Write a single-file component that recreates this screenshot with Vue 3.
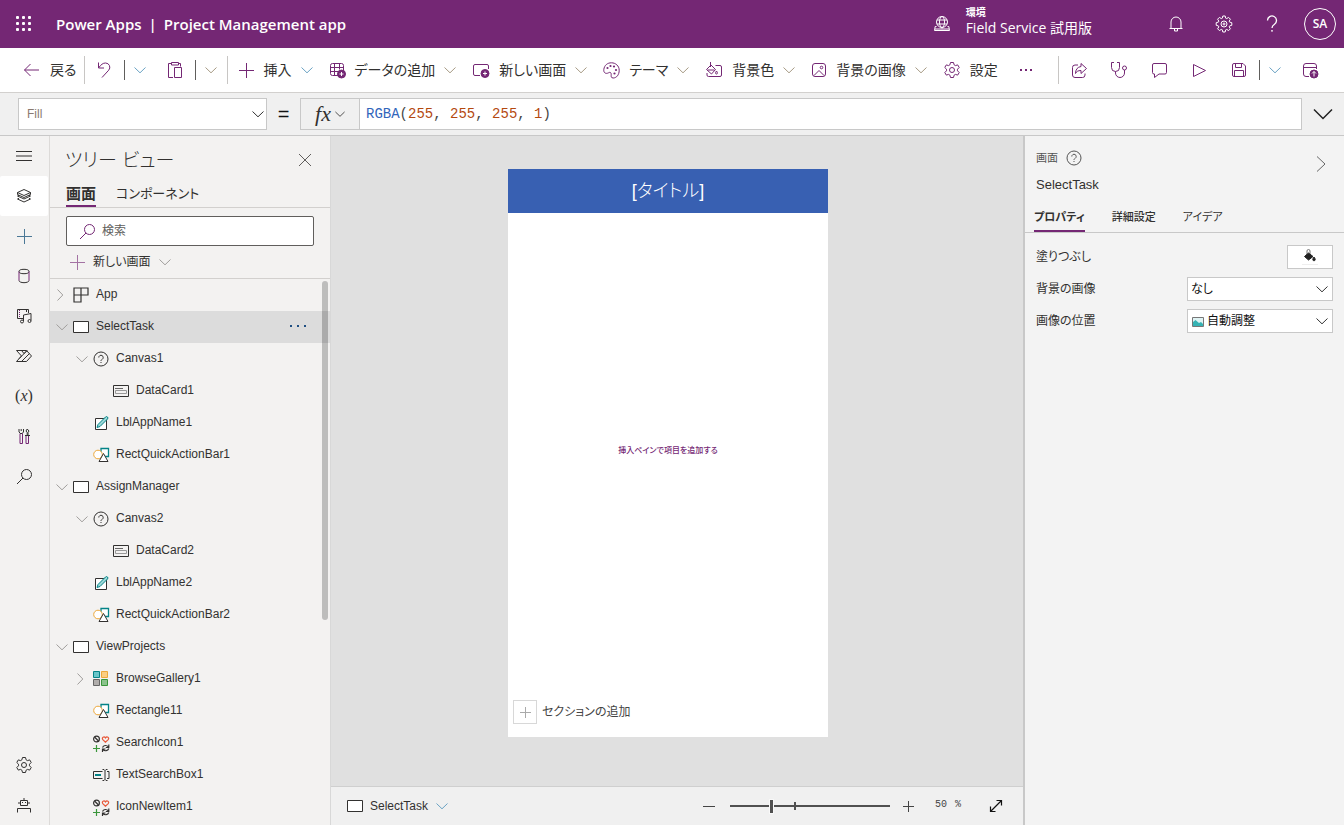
<script setup>
import { h, ref } from 'vue'

const shapes = {
  waffle: [17, 17, '<g fill="currentColor" stroke="none"><rect x="0" y="0" width="3" height="3" rx="1"/><rect x="6" y="0" width="3" height="3" rx="1"/><rect x="12" y="0" width="3" height="3" rx="1"/><rect x="0" y="6" width="3" height="3" rx="1"/><rect x="6" y="6" width="3" height="3" rx="1"/><rect x="12" y="6" width="3" height="3" rx="1"/><rect x="0" y="12" width="3" height="3" rx="1"/><rect x="6" y="12" width="3" height="3" rx="1"/><rect x="12" y="12" width="3" height="3" rx="1"/></g>'],
  globe: [16, 16, '<circle cx="8" cy="6" r="5.5"/><ellipse cx="8" cy="6" rx="2.5" ry="5.5"/><path d="M3 4h10M3 8h10M2.500 10.500H1.200L.5 14.500h15L14.800 10.500H13.500M8 11v1.500M1 13h14"/>'],
  bell: [16, 18, '<path d="M3 13V7a5 5 0 0 1 10 0v6M1.500 13.500h13M6.500 14v2h3v-2"/>'],
  gear: [18, 18, '<circle cx="9" cy="9" r="2.500"/><path d="M7.500 1.500h3l.6 2.300 1.300.8 2.300-.7 1.500 2.600-1.700 1.700v1.600l1.700 1.700-1.500 2.600-2.300-.7-1.300.8-.6 2.300h-3l-.6-2.300-1.300-.8-2.300.7-1.500-2.600 1.700-1.700V8.200L1.800 6.500l1.500-2.600 2.300.7 1.300-.8z" stroke-linejoin="round"/>'],
  gearBold: [18, 18, '<circle cx="9" cy="9" r="3"/><circle cx="9" cy="9" r="1"/><path d="M7.800 1h2.400l.5 2.200 1 .4 1.900-1.200 1.800 1.800-1.200 1.900.4 1 2.200.6v2.600l-2.200.6-.4 1 1.200 1.900-1.800 1.800-1.900-1.200-1 .4-.5 2.200H7.800l-.5-2.200-1-.4-1.900 1.200-1.800-1.800 1.200-1.900-.4-1L1.200 10.300V7.700l2.200-.6.4-1-1.200-1.900 1.800-1.800 1.900 1.200 1-.4z"/>'],
  help: [12, 18, '<path d="M1.500 5.500a4.500 4.500 0 1 1 7 3.700C6.500 10.500 6 11.300 6 13" stroke-width="1.3"/><circle cx="6" cy="15.800" r=".9" fill="currentColor" stroke="none"/>'],
  back: [17, 14, '<path d="M16 7H1.500M7.500 1l-6 6 6 6"/>'],
  undo: [16, 18, '<path d="M2.500 1.500v5.500h5.500M2.500 7C5 3.500 7 2 9.500 2a4.300 4.300 0 0 1 3.200 7.200L6 16.500"/>'],
  chevron: [12, 8, '<path d="M.5 1.500 6 6.800l5.500-5.300"/>'],
  chevronLarge: [20, 12, '<path d="m1 1.500 9 9 9-9" stroke-width="1.5"/>'],
  right: [8, 14, '<path d="m1.500 1.500 5.300 5.500-5.300 5.500"/>'],
  rightLarge: [12, 18, '<path d="m2 1.500 8 7.500-8 7.500"/>'],
  paste: [16, 18, '<path d="M6 16.500H1.500v-14h3M11.500 2.500h2v3M4.500 1.500h7v2.500h-7zM7.500 6.500h7v10h-7z"/>'],
  plus: [17, 17, '<path d="M8.500 1v15M1 8.500h15"/>'],
  data: [17, 18, '<rect x="1.500" y="2.500" width="13" height="12" rx="2"/><path d="M1.500 6.500h13M1.500 10.500h8M5.500 2.500v12M10.500 2.500v6"/><circle cx="12.500" cy="13" r="4" fill="#742774"/><path d="M10.500 13h4M12.500 11v4" stroke="#fff"/>'],
  screenAdd: [18, 16, '<path d="M8 13.500H3a1.500 1.500 0 0 1-1.500-1.500V4A1.500 1.500 0 0 1 3 2.500h12A1.500 1.500 0 0 1 16.500 4v3"/><circle cx="13" cy="11.500" r="4" fill="#742774"/><path d="M11 11.500h4M13 9.500v4" stroke="#fff"/>'],
  palette: [17, 17, '<path d="M.8 7.500C1.500 3 4.500.800 8.500.800s7.700 3 7.700 7.500-2.700 7.700-6 7.700c-2.500 0-2-2-2-3.500 0-2-1-2.700-2.700-1.700-2.500 1.400-5.100.2-4.700-3.300z"/><g fill="currentColor" stroke="none"><circle cx="4.500" cy="6" r="1.100"/><circle cx="7.500" cy="4" r="1.100"/><circle cx="11" cy="4.500" r="1.100"/><circle cx="13" cy="8" r="1.100"/><circle cx="11.500" cy="11.500" r="1.100"/></g>'],
  fill: [18, 16, '<path d="M10.500 3.500H15a1.500 1.500 0 0 1 1.500 1.500v8a1.500 1.500 0 0 1-1.500 1.500H3.500A1.500 1.500 0 0 1 2 13v-2M5.500 0v5M1.500 7.500 6 3l4.500 4.500-4 4.500zM2.500 8h7M11.500 9c-1.500 2-1 3 0 3s1.500-1 0-3"/>'],
  picture: [16, 16, '<rect x="1.500" y="1.500" width="13" height="13" rx="2.500"/><path d="m3 13.500 5-5 5 5"/><circle cx="10.500" cy="5.500" r="1.300"/>'],
  dots: [14, 4, '<g fill="currentColor" stroke="none"><rect x="1" y="1" width="2" height="2"/><rect x="6" y="1" width="2" height="2"/><rect x="11" y="1" width="2" height="2"/></g>'],
  wideDots: [16, 4, '<g fill="currentColor" stroke="none"><rect x="0" y="1" width="2" height="2"/><rect x="7" y="1" width="2" height="2"/><rect x="14" y="1" width="2" height="2"/></g>'],
  share: [17, 17, '<path d="M7 3H4a2.500 2.500 0 0 0-2.500 2.500v7.500A2.500 2.500 0 0 0 4 15.500h7.500A2.500 2.500 0 0 0 14 13v-1.500M10 1.500l5.500 5-5.500 5v-3c-3 0-4.500 1-5.500 3 0-4 2-6.500 5.500-7z"/>'],
  stethoscope: [18, 18, '<path d="M4 1.500H1.500v5a4 4 0 0 0 8 0v-5H7M5.500 10.500V12a4.500 4.500 0 0 0 9 0V9"/><circle cx="14.500" cy="7" r="2"/>'],
  comment: [17, 17, '<path d="M3 1.500h11A1.500 1.500 0 0 1 15.500 3v7.500A1.500 1.500 0 0 1 14 12H8l-4.500 3.500V12H3a1.500 1.500 0 0 1-1.500-1.500V3A1.500 1.500 0 0 1 3 1.500z"/>'],
  play: [15, 15, '<path d="m1.500 1.500 12 6-12 6z" stroke-linejoin="round"/>'],
  save: [16, 16, '<path d="M1.500 3A1.500 1.500 0 0 1 3 1.500h9l2.500 2.500v9a1.500 1.500 0 0 1-1.500 1.500H3A1.500 1.500 0 0 1 1.500 13zM4.500 1.500v4h6v-4M3.500 14.500v-6h9v6"/>'],
  publish: [17, 17, '<path d="M7 14.500H4A2.500 2.500 0 0 1 1.500 12V4A2.500 2.500 0 0 1 4 1.500h8A2.500 2.500 0 0 1 14.500 4v3M1.500 5.500h13"/><circle cx="12" cy="12" r="4" fill="#742774"/><path d="M12 14.500v-5M10 11.500l2-2 2 2" stroke="#fff"/>'],
  menu: [16, 10, '<path d="M0 .5h16M0 5h16M0 9.500h16"/>'],
  layers: [16, 16, '<path d="m8 1.500 6.500 3L8 7.500l-6.500-3zM1.500 4.500v2L8 9.500l6.500-3v-2M3 7.200 1.500 8 8 11l6.500-3-1.500-.8M3 10.200 1.500 11 8 14l6.500-3-1.500-.8"/>'],
  database: [12, 16, '<g stroke="#323130"><ellipse cx="6" cy="3.500" rx="5" ry="2.200"/><path d="M1 12.500c0 1.200 2.200 2.200 5 2.200s5-1 5-2.200"/></g><path d="M1 3.500v9M11 3.500v9"/>'],
  media: [17, 16, '<path d="M7.500 10.500H1.500v-9h11V5M10.500 2v2M7.500 13V7l7.500-1.500v7"/><circle cx="6" cy="13.500" r="1.500"/><circle cx="13.500" cy="13" r="1.500"/><path d="M3.500 2v8" stroke="#742774" stroke-dasharray="1 1"/>'],
  flow: [18, 14, '<path d="M1.500 1.500h10L16.500 7l-5 5.500h-10L6.500 7zM6.500 1.500 9 4.500l3-3M4 9.700l8-8M6.500 12.500l8-8"/>'],
  tools: [12, 17, '<path d="M2 5.500h2.500v10H2zM8 8v7.500h2.500V8"/><g stroke="#323130"><path d="M1 1v3l1.500 1.500h1.500L5.500 4V1M3.200 1v2M7 7.500h5M9.200 7.500v-3L8 3l1.200-2 1.800 2-1 1.500v3"/></g>'],
  search: [17, 17, '<circle cx="10.500" cy="6.500" r="5"/><path d="m7 10-6 6"/>'],
  robot: [16, 16, '<path d="M8 3V1M4.500 3.500h7v5h-7zM3 5v2M13 5v2M1.500 15.500v-4h13v4"/><g fill="currentColor" stroke="none"><rect x="6" y="5" width="1" height="1"/><rect x="9" y="5" width="1" height="1"/></g>'],
  close: [14, 14, '<path d="m1 1 12 12M13 1 1 13"/>'],
  app: [16, 16, '<path d="M1 1h7v7H1zM8 1h7v7H8zM1 8h7v7H1z" stroke-width="1.200"/>'],
  screen: [16, 12, '<path d="M.5.5h15v11H.5z" fill="#fff"/>'],
  canvas: [16, 16, '<circle cx="8" cy="8" r="7"/><path d="M5.800 6.500a2.200 2.200 0 1 1 3.400 1.800C8.300 8.900 8 9.300 8 10"/><rect x="7.500" y="11" width="1" height="1" fill="currentColor" stroke="none"/>'],
  card: [16, 12, '<path d="M.5.5h15v11H.5z"/><path d="M2 3.500h8" stroke="#666"/><path d="M2.500 5.500h11v3h-11z" stroke="#999"/>'],
  label: [16, 16, '<path d="M2.500 3.500h11v11h-11z" fill="#fff"/><path d="M4 12.500l1-3 7.500-7.500a1.200 1.200 0 0 1 2 2L7 11.500z" fill="#9dd8d8" stroke="#038387"/>'],
  shapes: [17, 16, '<path d="M8 1.500h7.500v8H8z" fill="#fff" stroke="#038387" stroke-width="1.300"/><circle cx="5" cy="7.500" r="4.300" fill="#fff" stroke="#eda83b"/><path d="M10.500 6.500 15 14.500H6z" fill="#fff"/>'],
  gallery: [16, 16, '<path d="M.5.5h6v6h-6z" fill="#69c5c9" stroke="#038387"/><path d="M8.500.5h6v6h-6z" fill="#fbce82" stroke="#eda83b"/><path d="M.5 8.500h6v6h-6z" fill="#b0adab" stroke="#666"/><path d="M8.500 8.500h6v6h-6z" fill="#8bc38c" stroke="#3a963b"/>'],
  icons: [17, 17, '<g stroke-width="1.200"><circle cx="3.500" cy="4" r="2.900"/><path d="m1.500 2 4 4"/><path d="M12.500 7.200 9.800 4.600c-1.300-2 1.200-3.800 2.700-1.700 1.500-2.100 4-.3 2.700 1.700z" stroke="#e8593a"/><path d="M3.500 10v7M0 13.500h7" stroke="#3a963b"/><path d="M9.500 12.500C10.500 10 13.500 9.800 15.500 12M15.800 9.500v3h-3M15.800 13.500c-1 2.500-4 3-6 1M9.500 17v-3h3"/></g>'],
  textbox: [17, 14, '<path d="M9.500 3.500H.5v7h9M14 3.500h2v7h-2"/><path d="M2 7h6" stroke="#038387" stroke-width="2"/><path d="M9.500 1.500h1.500l1 1 1-1h1.500M9.500 12.500h1.500l1-1 1 1h1.500M12 2.500v9"/>'],
  bucket: [16, 16, '<path d="M5 6V2a1.500 1.500 0 0 1 3 0v4" stroke="#777"/><path d="M2.500 7.500 6.500 4l4.500 3.500L6.500 11z" fill="currentColor"/><path d="M12 8c-2 2.500-1.200 3.700 0 3.700S14 10.500 12 8" fill="currentColor"/><path d="M0 15.500h16" stroke="#eee"/>'],
  photo: [12, 10, '<path d="M.5.500h11v9H.500z" fill="#dff3f4" stroke="#777"/><path d="M1 9V5l2.500-2L7 6l2-1 2 2v2z" fill="#36b3b4" stroke="none"/>'],
  expand: [14, 14, '<path d="m1.500 12.500 11-11M7.500 1.500h5v5M1.500 7.500v5h5" stroke-width="1.200"/>'],
  minus: [12, 1, '<path d="M0 .5h12"/>'],
  plusSmall: [11, 11, '<path d="M5.500 0v11M0 5.500h11"/>'],
}

const Icon = ({ name }) => {
  const [width, height, innerHTML] = shapes[name]
  return h('svg', {
    width, height, viewBox: `0 0 ${width} ${height}`,
    fill: 'none', stroke: 'currentColor', 'aria-hidden': 'true', innerHTML,
  })
}
Icon.props = ['name']

const commands = [
  { icon: 'plus', label: '挿入', menu: true },
  { icon: 'data', label: 'データの追加', menu: true },
  { icon: 'screenAdd', label: '新しい画面', menu: true },
  { icon: 'palette', label: 'テーマ', menu: true },
  { icon: 'fill', label: '背景色', menu: true },
  { icon: 'picture', label: '背景の画像', menu: true },
  { icon: 'gear', label: '設定' },
]
const actions = [
  { icon: 'share', label: '共有' },
  { icon: 'stethoscope', label: 'アプリ チェッカー' },
  { icon: 'comment', label: 'コメント' },
  { icon: 'play', label: 'プレビュー' },
  { icon: 'save', label: '保存' },
]
const rail = [
  { icon: 'layers', label: 'ツリー ビュー', active: true },
  { icon: 'plus', label: '挿入', tone: 'blue' },
  { icon: 'database', label: 'データ', tone: 'plum' },
  { icon: 'media', label: 'メディア' },
  { icon: 'flow', label: 'Power Automate' },
  { text: 'x', label: '変数' },
  { icon: 'tools', label: '高度なツール', tone: 'plum' },
  { icon: 'search', label: '検索' },
]
const tree = [
  { name: 'App', icon: 'app', level: 0, toggle: 'right' },
  { name: 'SelectTask', icon: 'screen', level: 0, toggle: 'chevron', selected: true },
  { name: 'Canvas1', icon: 'canvas', level: 1, toggle: 'chevron' },
  { name: 'DataCard1', icon: 'card', level: 2 },
  { name: 'LblAppName1', icon: 'label', level: 1 },
  { name: 'RectQuickActionBar1', icon: 'shapes', level: 1 },
  { name: 'AssignManager', icon: 'screen', level: 0, toggle: 'chevron' },
  { name: 'Canvas2', icon: 'canvas', level: 1, toggle: 'chevron' },
  { name: 'DataCard2', icon: 'card', level: 2 },
  { name: 'LblAppName2', icon: 'label', level: 1 },
  { name: 'RectQuickActionBar2', icon: 'shapes', level: 1 },
  { name: 'ViewProjects', icon: 'screen', level: 0, toggle: 'chevron' },
  { name: 'BrowseGallery1', icon: 'gallery', level: 1, toggle: 'right' },
  { name: 'Rectangle11', icon: 'shapes', level: 1 },
  { name: 'SearchIcon1', icon: 'icons', level: 1 },
  { name: 'TextSearchBox1', icon: 'textbox', level: 1 },
  { name: 'IconNewItem1', icon: 'icons', level: 1 },
]
const zoom = ref(25)
</script>

<template>
  <div class="studio">
    <header class="topbar">
      <button class="waffle" aria-label="アプリ起動ツール"><Icon name="waffle" /></button>
      <h1>Power Apps<span class="bar">|</span>Project Management app</h1>
      <button class="environment">
        <Icon name="globe" />
        <span class="env-text"><small>環境</small><span>Field Service 試用版</span></span>
      </button>
      <button class="top-action" aria-label="通知"><Icon name="bell" /></button>
      <button class="top-action" aria-label="設定"><Icon name="gearBold" /></button>
      <button class="top-action" aria-label="ヘルプ"><Icon name="help" /></button>
      <button class="top-action"><span class="avatar">SA</span></button>
    </header>

    <nav class="toolbar" aria-label="コマンド">
      <button class="back"><Icon name="back" /><span>戻る</span></button>
      <div class="split">
        <button class="split-main" aria-label="元に戻す"><Icon name="undo" /></button>
        <button class="split-menu tinted" aria-label="元に戻す メニュー"><Icon name="chevron" /></button>
        <button class="split-main" aria-label="貼り付け"><Icon name="paste" /></button>
        <button class="split-menu warm" aria-label="貼り付け メニュー"><Icon name="chevron" /></button>
      </div>
      <div class="commands">
        <button v-for="(c, i) in commands" :key="c.label" :class="i ? 'warm' : 'tinted'">
          <Icon :name="c.icon" /><span>{{ c.label }}</span><Icon v-if="c.menu" name="chevron" class="caret" />
        </button>
        <button class="more" aria-label="その他"><Icon name="dots" /></button>
      </div>
      <div class="actions">
        <button v-for="a in actions" :key="a.icon" :aria-label="a.label"><Icon :name="a.icon" /></button>
        <button class="split-menu save-menu tinted" aria-label="保存 メニュー"><Icon name="chevron" /></button>
        <button aria-label="公開"><Icon name="publish" /></button>
      </div>
    </nav>

    <section class="formula">
      <div class="select-box property">
        <select aria-label="プロパティ"><option>Fill</option></select><Icon name="chevron" />
      </div>
      <span class="equals">=</span>
      <button class="fx" aria-label="数式"><i>fx</i><Icon name="chevron" /></button>
      <div class="expression" role="textbox" aria-label="数式バー" contenteditable="true" spellcheck="false"><b>RGBA</b>(<em>255</em>, <em>255</em>, <em>255</em>, <em>1</em>)</div>
      <button class="expand-formula" aria-label="数式バーを展開"><Icon name="chevronLarge" /></button>
    </section>

    <div class="workspace">
      <nav class="rail" aria-label="作成メニュー">
        <button aria-label="メニュー"><Icon name="menu" /></button>
        <button v-for="r in rail" :key="r.label" :aria-label="r.label" :class="[r.tone, { active: r.active }]">
          <Icon v-if="r.icon" :name="r.icon" /><span v-else class="variable">(<i>{{ r.text }}</i>)</span>
        </button>
        <button class="rail-end" aria-label="設定"><Icon name="gear" /></button>
        <button aria-label="仮想エージェント"><Icon name="robot" /></button>
      </nav>

      <aside class="tree">
        <div class="tree-title">
          <h2>ツリー ビュー</h2>
          <button aria-label="閉じる"><Icon name="close" /></button>
        </div>
        <div class="tree-tabs" role="tablist">
          <button role="tab" aria-selected="true" class="current">画面</button>
          <button role="tab" aria-selected="false">コンポーネント</button>
        </div>
        <div class="tree-tools">
          <label class="search"><Icon name="search" /><input type="text" placeholder="検索" aria-label="検索" /></label>
          <button class="new-screen"><Icon name="plus" /><span>新しい画面</span><Icon name="chevron" class="caret" /></button>
        </div>
        <div class="tree-body">
          <ul>
            <li v-for="n in tree" :key="n.name" :class="['level-' + n.level, { selected: n.selected }]">
              <span class="toggle"><button v-if="n.toggle" :aria-label="n.name + ' の展開'"><Icon :name="n.toggle" /></button></span>
              <span class="node-icon"><Icon :name="n.icon" /></span>
              <span class="node-name">{{ n.name }}</span>
              <button v-if="n.selected" class="node-more" aria-label="その他"><Icon name="wideDots" /></button>
            </li>
          </ul>
          <div class="scroll-thumb"></div>
        </div>
      </aside>

      <main class="stage">
        <div class="stage-view">
          <div class="artboard">
            <div class="artboard-title">[タイトル]</div>
            <p class="artboard-hint">挿入ペインで項目を追加する</p>
            <button class="add-section"><span><Icon name="plusSmall" /></span>セクションの追加</button>
          </div>
        </div>
        <footer class="status">
          <button class="crumb"><Icon name="screen" /><span>SelectTask</span><Icon name="chevron" class="caret" /></button>
          <div class="zoom">
            <button aria-label="縮小"><Icon name="minus" /></button>
            <span class="slider"><input v-model="zoom" type="range" min="0" max="100" aria-label="ズーム" /></span>
            <button aria-label="拡大"><Icon name="plusSmall" /></button>
            <span class="percent"><span>50</span><span>%</span></span>
            <button class="fit" aria-label="ウィンドウに合わせる"><Icon name="expand" /></button>
          </div>
        </footer>
      </main>

      <aside class="props">
        <div class="props-head">
          <div>
            <p class="kind">画面 <Icon name="canvas" /></p>
            <p class="target">SelectTask</p>
          </div>
          <button aria-label="パネルを折りたたむ"><Icon name="rightLarge" /></button>
        </div>
        <div class="props-tabs" role="tablist">
          <button role="tab" aria-selected="true" class="current">プロパティ</button>
          <button role="tab" aria-selected="false" class="strong">詳細設定</button>
          <button role="tab" aria-selected="false">アイデア</button>
        </div>
        <div class="fields">
          <label for="fill-color">塗りつぶし</label>
          <button id="fill-color" class="swatch" aria-label="塗りつぶし"><Icon name="bucket" /></button>
          <label for="bg-image">背景の画像</label>
          <div class="select-box"><select id="bg-image"><option>なし</option></select><Icon name="chevron" /></div>
          <label for="image-position">画像の位置</label>
          <div class="select-box pictured">
            <Icon name="photo" class="lead" />
            <select id="image-position"><option>自動調整</option></select><Icon name="chevron" />
          </div>
        </div>
      </aside>
    </div>
  </div>
</template>

<style>
body {
  margin: 0;
}
</style>

<style scoped>
.studio {
  display: flex;
  flex-direction: column;
  height: 100vh;
  overflow: hidden;
  color: #323130;
  background: #f3f2f1;
  font: 12px/16px "Liberation Sans", "Noto Sans CJK JP", sans-serif;
  font-feature-settings: "palt";
}
.studio * {
  box-sizing: border-box;
}
svg {
  flex: none;
  display: block;
}
button {
  display: flex;
  align-items: center;
  padding: 0;
  border: 0;
  background: none;
  color: inherit;
  font: inherit;
  font-feature-settings: inherit;
  white-space: nowrap;
}
h1, h2, p, ul {
  margin: 0;
  padding: 0;
}

.topbar {
  display: flex;
  flex: none;
  align-items: center;
  height: 48px;
  background: #742774;
  color: #fff;
}
.waffle {
  justify-content: center;
  width: 48px;
  height: 48px;
}
h1 {
  margin-left: 8px;
  font: 600 15px/20px "Open Sans", sans-serif;
  white-space: nowrap;
}
.bar {
  margin: 0 7px;
}
.environment {
  gap: 16px;
  margin-left: auto;
  margin-right: 60px;
  text-align: left;
}
.env-text {
  display: flex;
  flex-direction: column;
  padding-bottom: 6px;
  font: 14px/18px "Open Sans", "Noto Sans CJK JP", sans-serif;
}
.env-text small {
  font-size: 10px;
  font-weight: 700;
  line-height: 14px;
}
.top-action {
  justify-content: center;
  width: 48px;
  height: 48px;
}
.avatar {
  width: 32px;
  height: 32px;
  border: 1px solid #fff;
  border-radius: 50%;
  font: 600 12px/30px "Open Sans", sans-serif;
}

.toolbar {
  display: flex;
  flex: none;
  align-items: center;
  height: 45px;
  background: #fff;
  border-bottom: 1px solid #d2d0ce;
  font-size: 14px;
  line-height: 20px;
}
.toolbar svg {
  color: #742774;
}
.back {
  gap: 10px;
  height: 28px;
  padding-left: 23px;
  padding-right: 7px;
  border-right: 1px solid #c8c6c4;
}
.split {
  display: flex;
  align-items: center;
  height: 28px;
  border-right: 1px solid #c8c6c4;
}
.split-main {
  justify-content: center;
  width: 39px;
}
.toolbar .split-menu {
  justify-content: center;
  width: 32px;
  height: 20px;
  border-left: 1px solid #605e5c;
}
.toolbar .tinted .caret,
.toolbar .split-menu.tinted svg {
  color: #6ba3c4;
}
.toolbar .warm .caret,
.toolbar .split-menu.warm svg {
  color: #a79b85;
}
.commands {
  display: flex;
  gap: 16px;
  margin-left: 10px;
}
.commands span {
  margin-left: 9px;
}
.commands .caret {
  margin-left: 9px;
}
.more {
  margin-left: 5px;
}
.actions {
  display: flex;
  align-items: center;
  height: 28px;
  margin-left: auto;
  margin-right: 14px;
  border-left: 1px solid #c8c6c4;
}
.actions button {
  justify-content: center;
  width: 40px;
}
.toolbar .save-menu {
  width: 31px;
}

.formula {
  display: flex;
  flex: none;
  align-items: center;
  height: 43px;
  padding-left: 18px;
  background: #f0f0f0;
  border-bottom: 1px solid #c8c8c8;
}
.select-box {
  position: relative;
  background: #fff;
  border: 1px solid #c8c8c8;
}
.select-box select {
  display: block;
  width: 100%;
  height: 22px;
  padding: 0 24px 0 3px;
  border: 0;
  appearance: none;
  background: none;
  color: #111;
  font: inherit;
  font-feature-settings: inherit;
}
.select-box svg {
  position: absolute;
  right: 4px;
  top: 50%;
  margin-top: -4px;
  color: #333;
  pointer-events: none;
}
.property {
  width: 249px;
}
.property select {
  height: 30px;
  padding-left: 8px;
  color: #8a7a70;
}
.property svg {
  right: 2px;
}
.equals {
  width: 33px;
  text-align: center;
  font-size: 20px;
  color: #111;
}
.fx {
  justify-content: center;
  gap: 4px;
  width: 60px;
  height: 32px;
  border: 1px solid #c8c8c8;
}
.fx i {
  font: italic 22px/28px "Liberation Serif", serif;
}
.fx svg {
  width: 10px;
}
.expression {
  flex: 1;
  height: 32px;
  padding-left: 6px;
  border: 1px solid #c8c8c8;
  border-left: 0;
  background: #fff;
  color: #444;
  font: 14px/30px "Liberation Mono", monospace;
  white-space: pre;
}
.expression b {
  color: #3165bb;
  font-weight: 400;
}
.expression em {
  color: #b4490f;
  font-style: normal;
}
.expand-formula {
  justify-content: center;
  width: 42px;
  height: 32px;
  color: #222;
}

.workspace {
  display: grid;
  flex: 1;
  grid-template-columns: 50px 280px minmax(0, 1fr) 321px;
  min-height: 0;
}
.rail {
  display: flex;
  flex-direction: column;
  border-right: 1px solid #dcdad8;
}
.rail button {
  flex: none;
  justify-content: center;
  width: 48px;
  height: 40px;
}
.rail .active {
  background: #fff;
  border-radius: 2px;
}
.rail .plum {
  color: #742774;
}
.rail .blue {
  color: #4b7896;
}
.variable {
  font: 16px/20px "Liberation Serif", serif;
}
.rail .rail-end {
  margin-top: auto;
}

.tree {
  display: flex;
  flex-direction: column;
  min-height: 0;
}
.tree-title {
  display: flex;
  flex: none;
  align-items: center;
  justify-content: space-between;
  height: 48px;
  padding: 0 18px 0 15px;
}
.tree-title h2 {
  padding-top: 2px;
  font-size: 19px;
  font-weight: 300;
  line-height: 24px;
}
.tree-title svg {
  color: #605e5c;
}
.tree-tabs {
  display: flex;
  flex: none;
  gap: 20px;
  height: 24px;
  padding-left: 16px;
  border-bottom: 1px solid #d2d0ce;
  font-size: 13px;
}
.tree-tabs button {
  height: 23px;
  padding-bottom: 2px;
  border-bottom: 2px solid transparent;
}
.tree-tabs .current {
  border-color: #742774;
  font-size: 15px;
  font-weight: 700;
}
.tree-tools {
  flex: none;
  height: 71px;
  padding: 8px 16px 0;
  border-bottom: 1px solid #d2d0ce;
}
.search {
  display: flex;
  align-items: center;
  gap: 6px;
  height: 30px;
  padding: 0 12px;
  border: 1px solid #605e5c;
  border-radius: 2px;
  background: #fff;
  color: #742774;
}
.search input {
  flex: 1;
  min-width: 0;
  padding: 0;
  border: 0;
  font: inherit;
}
.search input::placeholder {
  color: #605e5c;
}
.new-screen {
  gap: 7px;
  height: 32px;
  padding-left: 3px;
}
.new-screen svg {
  color: #a372a3;
}
.new-screen .caret {
  margin-left: 2px;
  color: #a19f9d;
}
.tree-body {
  position: relative;
  flex: 1;
  min-height: 0;
  overflow: hidden;
}
ul {
  list-style: none;
}
li {
  display: flex;
  align-items: center;
  height: 32px;
}
.level-1 {
  padding-left: 20px;
}
.level-2 {
  padding-left: 40px;
}
.selected {
  background: #dcdcdc;
}
.toggle {
  width: 23px;
  padding-left: 6px;
}
.toggle svg {
  color: #a19f9d;
}
.node-icon {
  display: flex;
  width: 17px;
}
.node-name {
  margin-left: 6px;
  padding-bottom: 2px;
}
.node-more {
  margin-left: auto;
  margin-right: 24px;
  padding-bottom: 2px;
  color: #1f4f82;
}
.scroll-thumb {
  position: absolute;
  right: 2px;
  top: 2px;
  width: 6px;
  height: 62%;
  border-radius: 3px;
  background: rgba(0, 0, 0, 0.22);
}

.stage {
  display: flex;
  flex-direction: column;
  min-width: 0;
  border-left: 1px solid #d8d8d8;
}
.stage-view {
  display: flex;
  flex: 1;
  justify-content: center;
  align-items: flex-start;
  padding: 33px 18px 0 0;
  background: #e0e0e0;
}
.artboard {
  display: flex;
  flex-direction: column;
  width: 320px;
  height: 568px;
  background: #fff;
}
.artboard-title {
  background: #3860b2;
  color: #fff;
  font-size: 18px;
  font-weight: 300;
  line-height: 44px;
  text-align: center;
}
.artboard-hint {
  margin: auto;
  padding-bottom: 12px;
  color: #742774;
  font-size: 8px;
  font-weight: 500;
  line-height: 12px;
}
.add-section {
  gap: 5px;
  padding: 0 5px 13px;
  color: #444;
}
.add-section span {
  display: flex;
  align-items: center;
  justify-content: center;
  width: 24px;
  height: 24px;
  border: 1px solid #d8d8d8;
  color: #aaa;
}
.status {
  display: flex;
  flex: none;
  align-items: center;
  justify-content: space-between;
  height: 39px;
  padding: 0 20px 0 16px;
  border-top: 1px solid #cfcfcf;
  background: #f0f0f0;
}
.crumb {
  gap: 7px;
}
.crumb .caret {
  margin-left: 1px;
  color: #6ba3c4;
}
.zoom {
  display: flex;
  align-items: center;
  color: #444;
}
.slider {
  position: relative;
  display: flex;
  width: 160px;
  margin: 0 13px 0 15px;
}
.slider::after {
  position: absolute;
  top: 50%;
  left: 40%;
  width: 2px;
  height: 8px;
  margin-top: -4px;
  background: #505050;
  content: "";
}
.slider input {
  width: 100%;
  height: 16px;
  margin: 0;
  appearance: none;
  background: linear-gradient(#505050, #505050) center / 100% 2px no-repeat;
}
.slider input::-webkit-slider-thumb {
  width: 5px;
  height: 15px;
  appearance: none;
  border: 1px solid #f8f8f8;
  background: #505050;
}
.percent {
  display: flex;
  gap: 8px;
  margin: 0 28px 0 21px;
  font: 10px/14px "Liberation Mono", monospace;
  padding-bottom: 2px;
}
.fit {
  color: #111;
}

.props {
  border-left: 2px solid #c8c8c8;
  background: #f3f3f3;
}
.props-head {
  display: flex;
  justify-content: space-between;
  height: 68px;
  padding: 13px 17px 0 11px;
}
.props-head button {
  height: 30px;
  color: #666;
}
.kind {
  display: flex;
  align-items: center;
  gap: 8px;
  height: 18px;
  color: #555;
  font-size: 11px;
}
.target {
  margin-top: 10px;
  font-size: 13px;
}
.props-tabs {
  display: flex;
  gap: 27px;
  height: 29px;
  padding-left: 9px;
  border-bottom: 1px solid #c8c8c8;
  font-size: 11px;
}
.props-tabs button {
  height: 28px;
  border-bottom: 2px solid transparent;
}
.props-tabs .current {
  border-color: #742774;
  font-weight: 700;
}
.props-tabs .strong {
  font-weight: 500;
}
.fields {
  display: grid;
  grid-template-columns: 1fr 146px;
  gap: 8px 0;
  align-items: center;
  padding: 12px 11px;
}
.swatch {
  justify-content: center;
  justify-self: end;
  width: 46px;
  height: 24px;
  border: 1px solid #c8c8c8;
  background: #fff;
  color: #222;
}
.pictured select {
  padding-left: 19px;
}
.select-box .lead {
  left: 4px;
  right: auto;
}
</style>
